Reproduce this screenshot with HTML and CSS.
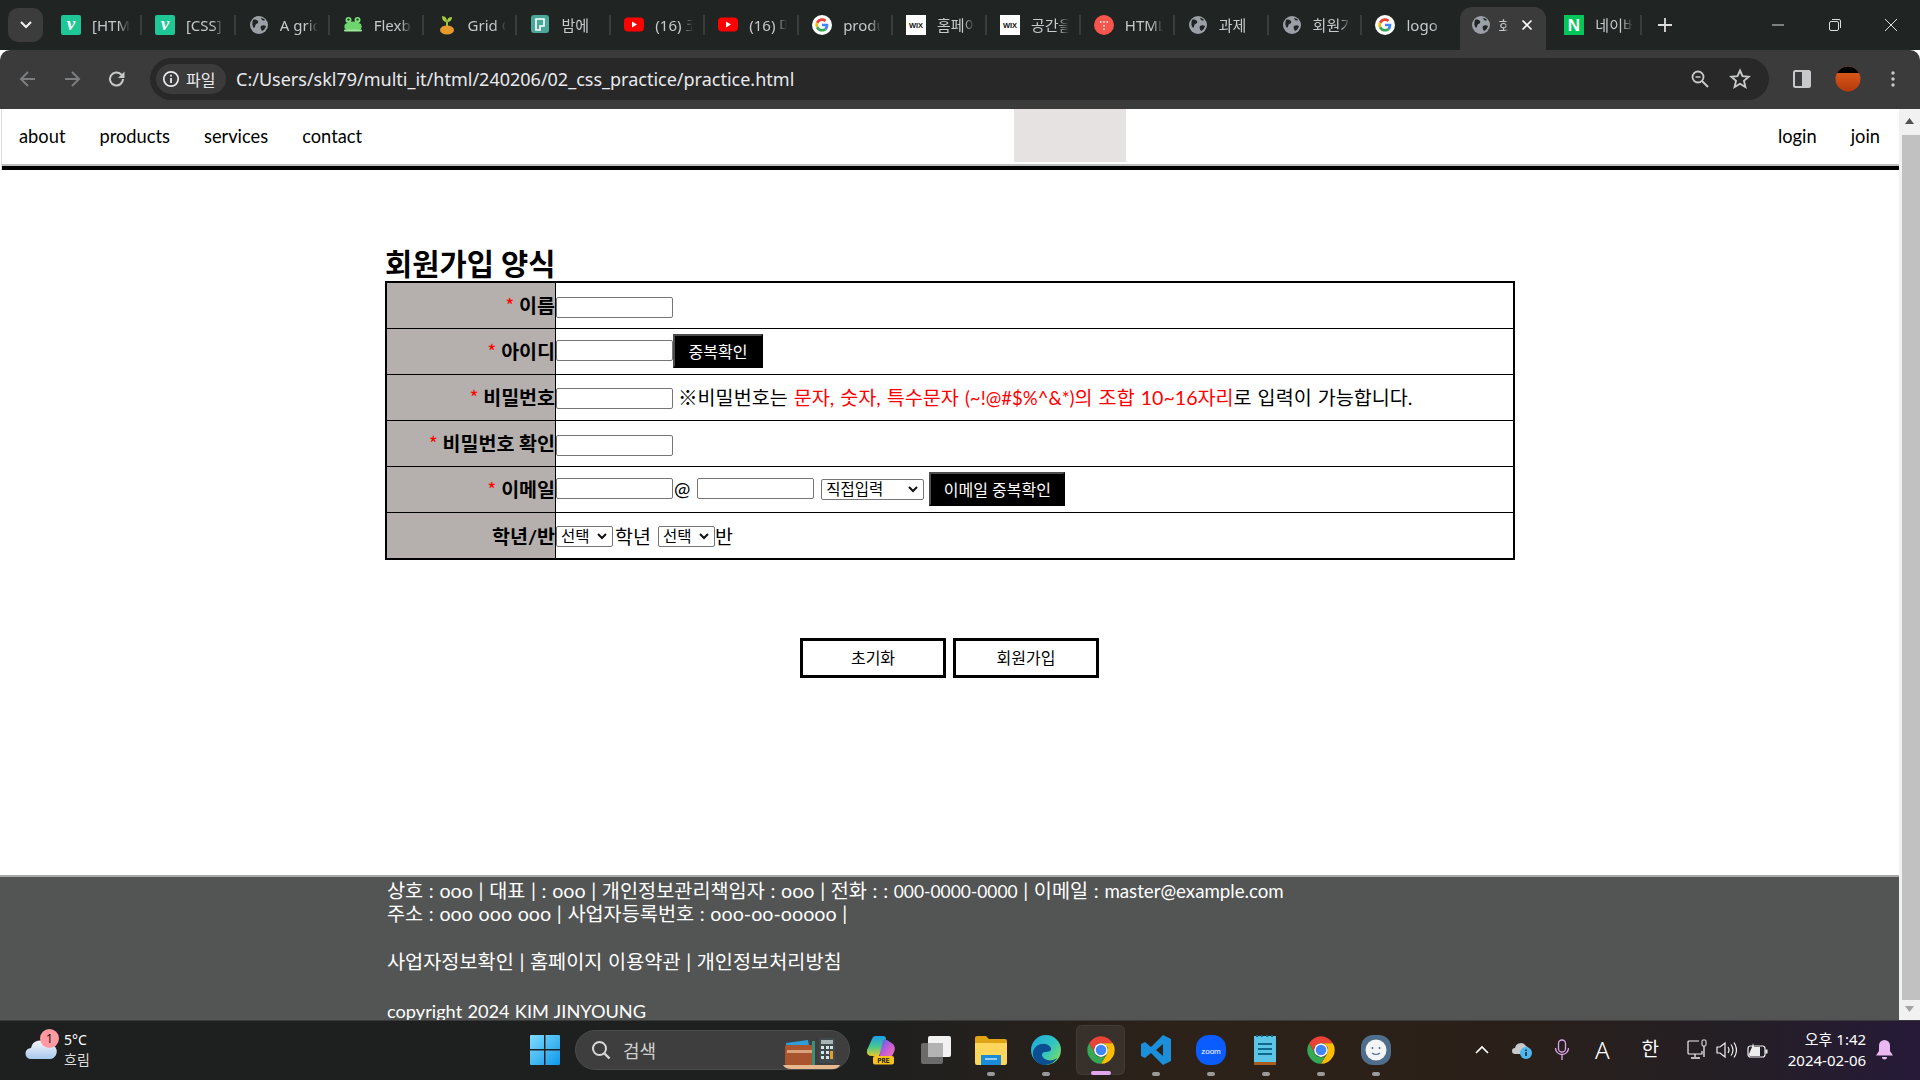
FILE: index.html
```html
<!DOCTYPE html>
<html lang="ko">
<head>
<meta charset="utf-8">
<title>회원가입 양식</title>
<link rel="stylesheet" href="styles.css">
</head>
<body>
<svg class="defs" width="0" height="0" aria-hidden="true">
  <defs>
    <symbol id="i-v" viewBox="0 0 20 20"><rect width="20" height="20" rx="2" fill="#1fc796"/><text x="10" y="15" text-anchor="middle" class="fav-v">v</text></symbol>
    <symbol id="i-globe" viewBox="0 0 20 20"><circle cx="10" cy="10" r="9" fill="#9aa0a6"/><path d="M4 5c2-1 4 0 5 1 1 2-1 3-2 3-1 2-1 3-2 4-2-2-2-5-1-8zM12 3c2 0 3 1 4 2-1 1-3 1-4-2zM12 11c2-1 3-1 5 0-1 3-2 4-4 5-1-2-2-3-1-5z" fill="#202423"/></symbol>
    <symbol id="i-frog" viewBox="0 0 20 20"><circle cx="5.5" cy="5" r="3" fill="#7ee07e"/><circle cx="14.500" cy="5" r="3" fill="#7ee07e"/><circle cx="5.500" cy="4.600" r="1.200" fill="#1d4a1d"/><circle cx="14.500" cy="4.600" r="1.200" fill="#1d4a1d"/><path d="M2 9q8-5 16 0 2 5-2 6H4q-4-1-2-6z" fill="#6fd66f"/><rect x="1" y="14.500" width="18" height="2" rx="1" fill="#9ae89a"/></symbol>
    <symbol id="i-sprout" viewBox="0 0 20 20"><ellipse cx="10" cy="15" rx="7" ry="4.500" fill="#e89a2c"/><path d="M10 11V7" stroke="#9ac43c" stroke-width="2"/><path d="M10 7Q5 7 5 1q5 0 5 6zM10 7q5 0 5-5-5 0-5 5z" fill="#a4cc3e"/></symbol>
    <symbol id="i-paper" viewBox="0 0 20 20"><rect x="1" width="18" height="18" rx="3" fill="#4aa79a"/><path d="M6 4h8v7h-4v4H6z" fill="none" stroke="#fff" stroke-width="1.600"/></symbol>
    <symbol id="i-yt" viewBox="0 0 20 20"><rect y="2.500" width="20" height="14" rx="4" fill="#f00"/><path d="M8 6.500l5 3-5 3z" fill="#fff"/></symbol>
    <symbol id="i-g" viewBox="0 0 60 60"><circle cx="30" cy="30" r="30" fill="#fff"/><g transform="translate(10 10) scale(.83)"><path fill="#EA4335" d="M24 9.500c3.540 0 6.710 1.220 9.210 3.600l6.850-6.850C35.900 2.380 30.470 0 24 0 14.620 0 6.510 5.380 2.560 13.220l7.980 6.190C12.430 13.720 17.740 9.500 24 9.500z"/><path fill="#4285F4" d="M46.980 24.550c0-1.570-.15-3.090-.38-4.550H24v9.020h12.940c-.58 2.960-2.260 5.480-4.780 7.180l7.730 6c4.510-4.180 7.090-10.360 7.090-17.650z"/><path fill="#FBBC05" d="M10.530 28.590c-.48-1.450-.76-2.990-.76-4.590s.27-3.140.76-4.590l-7.980-6.190C.92 16.460 0 20.120 0 24c0 3.880.92 7.540 2.560 10.780l7.970-6.190z"/><path fill="#34A853" d="M24 48c6.480 0 11.930-2.130 16.080-5.810l-7.730-6c-2.150 1.450-4.920 2.300-8.350 2.300-6.260 0-11.570-4.220-13.470-9.910l-7.980 6.190C6.510 42.620 14.620 48 24 48z"/></g></symbol>
    <symbol id="i-wix" viewBox="0 0 20 20"><rect width="20" height="20" fill="#fff"/><text x="10" y="12.500" text-anchor="middle" class="fav-wix">WIX</text></symbol>
    <symbol id="i-t" viewBox="0 0 20 20"><circle cx="10" cy="10" r="10" fill="#f5554a"/><path d="M6 7h1.500M9.200 7h1.600M12.500 7H14M10 10v1.500M10 13.500v1.500" stroke="#fff" stroke-width="1.500"/></symbol>
    <symbol id="i-n" viewBox="0 0 20 20"><rect width="20" height="20" fill="#03c75a"/><text x="10" y="16" text-anchor="middle" class="fav-n">N</text></symbol>
    <symbol id="i-chrome" viewBox="0 0 48 48"><path fill="#ea4335" d="M5 13A22 22 0 0 1 43 13H24A11 11 0 0 0 14 29z"/><path fill="#fbbc04" d="M43 13A22 22 0 0 1 24 46L34 29A11 11 0 0 0 24 13z"/><path fill="#34a853" d="M24 46A22 22 0 0 1 5 13L14 29A11 11 0 0 0 34 29z"/><circle cx="24" cy="24" r="11" fill="#fff"/><circle cx="24" cy="24" r="8.500" fill="#4285f4"/></symbol>
  </defs>
</svg>

<header class="tabstrip">
  <div class="tab-menu"><svg width="14" height="10" viewBox="0 0 14 10"><path d="M2 2l5 5 5-5" fill="none" stroke="#eee" stroke-width="2.200"/></svg></div>
  <div class="tab"><svg class="fav"><use href="#i-v"/></svg><span class="tab-label">[HTML</span></div>
  <div class="tab"><svg class="fav"><use href="#i-v"/></svg><span class="tab-label">[CSS]</span></div>
  <div class="tab"><svg class="fav"><use href="#i-globe"/></svg><span class="tab-label">A grid</span></div>
  <div class="tab"><svg class="fav"><use href="#i-frog"/></svg><span class="tab-label">Flexbo</span></div>
  <div class="tab"><svg class="fav"><use href="#i-sprout"/></svg><span class="tab-label">Grid G</span></div>
  <div class="tab"><svg class="fav"><use href="#i-paper"/></svg><span class="tab-label">밤에</span></div>
  <div class="tab"><svg class="fav"><use href="#i-yt"/></svg><span class="tab-label">(16) 코딩</span></div>
  <div class="tab"><svg class="fav"><use href="#i-yt"/></svg><span class="tab-label">(16) 마</span></div>
  <div class="tab"><svg class="fav"><use href="#i-g"/></svg><span class="tab-label">produ</span></div>
  <div class="tab"><svg class="fav"><use href="#i-wix"/></svg><span class="tab-label">홈페이</span></div>
  <div class="tab"><svg class="fav"><use href="#i-wix"/></svg><span class="tab-label">공간을</span></div>
  <div class="tab"><svg class="fav"><use href="#i-t"/></svg><span class="tab-label">HTML</span></div>
  <div class="tab"><svg class="fav"><use href="#i-globe"/></svg><span class="tab-label">과제</span></div>
  <div class="tab"><svg class="fav"><use href="#i-globe"/></svg><span class="tab-label">회원가</span></div>
  <div class="tab tab-plain"><svg class="fav"><use href="#i-g"/></svg><span class="tab-label">logo</span></div>
  <div class="tab tab-active"><svg class="fav"><use href="#i-globe"/></svg><span class="tab-label">회</span><svg class="tab-close" width="12" height="12" viewBox="0 0 12 12"><path d="M1.500 1.500l9 9M10.500 1.500l-9 9" stroke="#fff" stroke-width="1.600"/></svg></div>
  <div class="tab tab-last"><svg class="fav"><use href="#i-n"/></svg><span class="tab-label">네이버</span></div>
  <svg class="new-tab" width="16" height="16" viewBox="0 0 16 16"><path d="M8 1v14M1 8h14" stroke="#ddd" stroke-width="1.800"/></svg>
  <div class="win-controls">
    <svg width="14" height="14" viewBox="0 0 14 14"><path d="M1 7h12" stroke="#ddd" stroke-width="1"/></svg>
    <svg width="14" height="14" viewBox="0 0 14 14"><rect x="1.500" y="3.500" width="9" height="9" rx="1.500" fill="none" stroke="#ddd"/><path d="M4 1.500h7a1.500 1.500 0 0 1 1.500 1.500v7" fill="none" stroke="#ddd"/></svg>
    <svg width="14" height="14" viewBox="0 0 14 14"><path d="M1 1l12 12M13 1L1 13" stroke="#ddd" stroke-width="1"/></svg>
  </div>
</header>

<div class="toolbar">
  <svg class="tb-back" width="20" height="20" viewBox="0 0 20 20"><path d="M17 10H4M10 3l-7 7 7 7" fill="none" stroke="#7b7d7e" stroke-width="2"/></svg>
  <svg class="tb-fwd" width="20" height="20" viewBox="0 0 20 20"><path d="M3 10h13M10 3l7 7-7 7" fill="none" stroke="#7b7d7e" stroke-width="2"/></svg>
  <svg class="tb-reload" width="20" height="20" viewBox="0 0 20 20"><path d="M16 10a6.500 6.500 0 1 1-2-4.700L16 7" fill="none" stroke="#c8c9ca" stroke-width="2"/><path d="M17.500 2.500v6.500H11z" fill="#c8c9ca"/></svg>
  <div class="omnibox">
    <div class="chip">
      <svg width="18" height="18" viewBox="0 0 18 18"><circle cx="9" cy="9" r="7.200" fill="none" stroke="#e8eaed" stroke-width="1.700"/><path d="M9 8v5M9 4.800v1.800" stroke="#e8eaed" stroke-width="1.800"/></svg>
      <span>파일</span>
    </div>
    <span class="url">C:/Users/skl79/multi_it/html/240206/02_css_practice/practice.html</span>
    <svg class="om-zoom" width="20" height="20" viewBox="0 0 20 20"><circle cx="8" cy="8" r="5.500" fill="none" stroke="#c8c9ca" stroke-width="1.800"/><path d="M12 12l6 6" stroke="#c8c9ca" stroke-width="2"/><path d="M5.500 8h5" stroke="#c8c9ca" stroke-width="1.500"/></svg>
    <svg class="om-star" width="22" height="22" viewBox="0 0 22 22"><path d="M11 2.500l2.500 5.700 6.200.6-4.700 4.100 1.400 6.100-5.400-3.200-5.400 3.200 1.400-6.100-4.700-4.100 6.200-.6z" fill="none" stroke="#c8c9ca" stroke-width="1.900"/></svg>
  </div>
  <svg class="tb-side" width="20" height="20" viewBox="0 0 20 20"><rect x="2" y="2" width="16" height="16" rx="1.500" fill="none" stroke="#c8c9ca" stroke-width="2"/><rect x="10" y="2" width="8" height="16" fill="#c8c9ca"/></svg>
  <svg class="tb-avatar" width="26" height="26" viewBox="0 0 26 26"><defs><linearGradient id="av" x1="0" y1="0" x2="0" y2="1"><stop offset="0" stop-color="#e4601c"/><stop offset="1" stop-color="#b53a0c"/></linearGradient></defs><circle cx="13" cy="13" r="12.500" fill="url(#av)"/><path d="M2 7A12.500 12.500 0 0 1 24 7z" fill="#000"/></svg>
  <svg class="tb-menu" width="6" height="20" viewBox="0 0 6 20"><circle cx="3" cy="4" r="1.700" fill="#c8c9ca"/><circle cx="3" cy="10" r="1.700" fill="#c8c9ca"/><circle cx="3" cy="16" r="1.700" fill="#c8c9ca"/></svg>
</div>

<div class="viewport">
  <div class="page">
    <nav class="site-nav">
      <ul class="nav-links">
        <li>about</li><li>products</li><li>services</li><li>contact</li>
      </ul>
      <div class="logo-box"></div>
      <ul class="nav-links">
        <li>login</li><li>join</li>
      </ul>
    </nav>
    <main class="content">
      <h2 class="form-title">회원가입 양식</h2>
      <table class="form-table">
        <tr><th><span class="req">*</span> 이름</th><td><input class="field" type="text"></td></tr>
        <tr><th><span class="req">*</span> 아이디</th><td class="cell-up"><input class="field" type="text"><button class="btn-dark" type="button">중복확인</button></td></tr>
        <tr><th><span class="req">*</span> 비밀번호</th><td><input class="field field-down" type="password"><span class="hint">※비밀번호는 <span class="hint-red">문자, 숫자, 특수문자 <small class="hint-small">(~!@#$%^&amp;*)</small>의 조합 10~16자리</span>로 입력이 가능합니다.</span></td></tr>
        <tr><th><span class="req">*</span> 비밀번호 확인</th><td><input class="field" type="password"></td></tr>
        <tr><th><span class="req">*</span> 이메일</th><td class="cell-up"><input class="field" type="text"><span class="at">@</span><input class="field field-domain" type="text"><select class="sel sel-mail"><option>직접입력</option></select><button class="btn-dark btn-mail" type="button">이메일 중복확인</button></td></tr>
        <tr><th>학년/반</th><td><select class="sel sel-num"><option>선택</option></select><span class="unit">학년</span><select class="sel sel-num sel-second"><option>선택</option></select><span class="unit">반</span></td></tr>
      </table>
      <div class="actions">
        <button class="btn-line" type="button">초기화</button>
        <button class="btn-line" type="button">회원가입</button>
      </div>
    </main>
    <footer class="site-footer">
      <p class="f-line f-first">상호 : ooo | 대표 | : ooo | 개인정보관리책임자 : ooo | 전화 : : <span class="f-num">000-0000-0000</span> | 이메일 : <span class="f-mail">master@example.com</span></p>
      <p class="f-line">주소 : ooo ooo ooo | 사업자등록번호 : ooo-oo-ooooo |</p>
      <p class="f-line f-gap">사업자정보확인 | 홈페이지 이용약관 | 개인정보처리방침</p>
      <p class="f-line f-gap2 f-copy">copyright 2024 KIM JINYOUNG</p>
    </footer>
  </div>
  <div class="scrollbar">
    <svg width="11" height="8" viewBox="0 0 11 8"><path d="M5.500 1l4.500 6H1z" fill="#505050"/></svg>
    <div class="thumb"></div>
    <svg width="11" height="8" viewBox="0 0 11 8"><path d="M5.500 7L10 1H1z" fill="#a3a3a3"/></svg>
  </div>
</div>

<div class="taskbar">
  <div class="weather">
    <div class="weather-icon">
      <svg width="32" height="20" viewBox="0 0 32 20"><defs><linearGradient id="cl" x1="0" y1="0" x2="0" y2="1"><stop offset="0" stop-color="#f6f8fb"/><stop offset="1" stop-color="#a9c8ee"/></linearGradient></defs><path d="M6 20a5.500 5.500 0 0 1 0-11 9 9 0 0 1 16-4 7.500 7.500 0 0 1 4 15z" fill="url(#cl)"/></svg>
      <span class="badge">1</span>
    </div>
    <div class="weather-text"><span>5°C</span><span class="weather-sub">흐림</span></div>
  </div>
  <div class="tb-item">
    <svg width="30" height="30" viewBox="0 0 30 30"><defs><linearGradient id="win" x1="0" y1="0" x2="1" y2="1"><stop offset="0" stop-color="#7fdcfd"/><stop offset="1" stop-color="#0f98ea"/></linearGradient></defs><path d="M0 1a1 1 0 0 1 1-1h13v14H0zM15.500 0H29a1 1 0 0 1 1 1v13H15.500zM0 15.500h14V30H1a1 1 0 0 1-1-1zM15.500 15.500H30V29a1 1 0 0 1-1 1H15.500z" fill="url(#win)"/></svg>
  </div>
  <div class="searchbox">
    <svg width="20" height="20" viewBox="0 0 20 20"><circle cx="8.500" cy="8.500" r="6.500" fill="none" stroke="#d8d8d8" stroke-width="2"/><path d="M13 13l5.500 5.500" stroke="#d8d8d8" stroke-width="2.400"/></svg>
    <span class="search-text">검색</span>
    <svg class="search-art" width="58" height="34" viewBox="0 0 58 34"><rect x="2" y="10" width="30" height="20" rx="1.500" fill="#a8552f"/><path d="M3 8l22-3 1 5H3z" fill="#2c9fd8"/><rect x="4" y="15" width="25" height="3" fill="#d9a27a"/><rect x="29" y="6" width="3" height="24" fill="#3d8f78"/><rect x="36" y="3" width="16" height="25" rx="1.500" fill="#3f4a4d"/><rect x="38" y="5" width="12" height="4" fill="#a9b5b5"/><path d="M38 11h3v3h-3zM43 11h3v3h-3zM47 11h3v3h-3zM38 16h3v3h-3zM43 16h3v3h-3zM38 21h3v3h-3zM43 21h3v3h-3z" fill="#d8e2e2"/><rect x="47" y="16" width="3" height="8" fill="#e89b2c"/><path d="M0 30h57q-2 4-7 4H8q-6 0-8-4z" fill="#e6b98f"/></svg>
  </div>
  <div class="tb-apps">
    <div class="tb-item"><svg width="30" height="30" viewBox="0 0 30 30"><defs><linearGradient id="cpa" x1="0" y1="0" x2="0" y2="1"><stop offset="0" stop-color="#1c9fe8"/><stop offset=".55" stop-color="#49c98a"/><stop offset="1" stop-color="#e8c62a"/></linearGradient><linearGradient id="cpb" x1="0" y1="0" x2="1" y2="1"><stop offset="0" stop-color="#2f6fe8"/><stop offset=".5" stop-color="#c65ad8"/><stop offset="1" stop-color="#f07ab0"/></linearGradient></defs><path d="M9 1h8c2 0 3 1 3 3L13 21H6q-6 0-5-6L6 4q1-3 3-3z" fill="url(#cpa)"/><path d="M17 5q2-1 4 0l6 4q3 3 1 8l-2 4q-1 2-4 2h-9z" fill="url(#cpb)"/><rect x="7" y="21" width="21" height="8.500" rx="2" fill="#f8c21c"/><text x="17.500" y="28" text-anchor="middle" class="pre-text">PRE</text></svg></div>
    <div class="tb-item"><svg width="32" height="30" viewBox="0 0 32 30"><rect x="1" y="8" width="22" height="21" rx="2" fill="#6b6b6b"/><rect x="8" y="1" width="23" height="21" rx="2" fill="#f2f2f2"/><rect x="8" y="8" width="15" height="14" fill="#b3b3b3"/></svg></div>
    <div class="tb-item has-dot"><svg width="34" height="30" viewBox="0 0 34 30"><path d="M1 3a2 2 0 0 1 2-2h9l3 3h16a2 2 0 0 1 2 2v4H1z" fill="#e0a314"/><path d="M1 8h32v20a2 2 0 0 1-2 2H3a2 2 0 0 1-2-2z" fill="#ffd65c"/><path d="M7 20h20v10H7z" fill="#1a8bd6"/><path d="M11 24h12" stroke="#bfe4fa" stroke-width="1.500"/></svg></div>
    <div class="tb-item has-dot"><svg width="30" height="30" viewBox="0 0 30 30"><defs><linearGradient id="ed" x1="0" y1="0" x2="1" y2=".8"><stop offset="0" stop-color="#1ea7e0"/><stop offset=".6" stop-color="#33c6c0"/><stop offset="1" stop-color="#7ddb5a"/></linearGradient></defs><circle cx="15" cy="15" r="15" fill="url(#ed)"/><path d="M2 17C4 8 16 6 20 13c1 3-3 4-6 4-4 0-4 5 0 7 3 2 8 2 12-1-3 5-8 7-13 7C6 29 1 24 2 17z" fill="#0b4f92"/></svg></div>
    <div class="tb-item tb-active has-pill"><svg width="30" height="30"><use href="#i-chrome"/></svg></div>
    <div class="tb-item has-dot"><svg width="30" height="30" viewBox="0 0 30 30"><path d="M22 0l8 4v22l-8 4L10 18l-6 5-4-2v-12l4-2 6 5zM22 9l-7 6 7 6z" fill="#1c8fdb"/></svg></div>
    <div class="tb-item has-dot"><svg width="30" height="30" viewBox="0 0 30 30"><rect width="30" height="30" rx="13" fill="#0b5cff"/><text x="15" y="18.500" text-anchor="middle" class="zoom-text">zoom</text></svg></div>
    <div class="tb-item has-dot"><svg width="24" height="30" viewBox="0 0 24 30"><rect y="1" width="22" height="29" fill="#5cc4e4"/><rect y="27" width="22" height="3" fill="#a85c20"/><path d="M2 1h2M7 1h2M12 1h2M17 1h2" stroke="#0e6a8a" stroke-width="2"/><path d="M4 9h14M4 14h14M4 19h14" stroke="#0e6a8a" stroke-width="2"/></svg></div>
    <div class="tb-item has-dot"><svg width="30" height="30"><use href="#i-chrome"/></svg></div>
    <div class="tb-item has-dot"><svg width="30" height="30" viewBox="0 0 30 30"><rect width="30" height="30" rx="12" fill="#4e6e8c"/><circle cx="15" cy="15" r="10.500" fill="#f3f4f5"/><circle cx="11.500" cy="13" r="1" fill="#4e6e8c"/><circle cx="18.500" cy="13" r="1" fill="#4e6e8c"/><path d="M11 18q4 3 8 0" fill="none" stroke="#4e6e8c" stroke-width="1.200"/></svg></div>
  </div>
  <div class="tray">
    <svg width="14" height="9" viewBox="0 0 14 9"><path d="M1 8l6-6 6 6" fill="none" stroke="#fff" stroke-width="1.700"/></svg>
    <svg class="tray-cloud" width="21" height="20" viewBox="0 0 21 20"><path d="M3 14a3 3 0 0 1 0-6 6 6 0 0 1 11-2 4 4 0 0 1 2 6l-2 2z" fill="#c9c9c9"/><circle cx="14" cy="13" r="6" fill="#4fb7ec"/><path d="M14 12v4M14 9.500v1.500" stroke="#10202a" stroke-width="1.500"/></svg>
    <svg class="tray-mic" width="16" height="22" viewBox="0 0 16 22"><rect x="4.500" y="1" width="7" height="12" rx="3.500" fill="none" stroke="#d9a6ec" stroke-width="1.300"/><path d="M1.500 9a6.500 6.500 0 0 0 13 0M8 16v5" fill="none" stroke="#d9a6ec" stroke-width="1.300"/></svg>
    <span class="tray-a">A</span>
    <span class="tray-han">한</span>
    <svg class="tray-net" width="21" height="21" viewBox="0 0 21 21"><path d="M12 2H2a1 1 0 0 0-1 1v11a1 1 0 0 0 1 1h13v-3" fill="none" stroke="#eee" stroke-width="1.200"/><path d="M8 15v3M4 19h9" stroke="#eee" stroke-width="1.300"/><rect x="15" y="1" width="4" height="6" rx="1" fill="none" stroke="#eee"/><path d="M17 7v11" stroke="#eee" stroke-width="1.300"/></svg>
    <svg class="tray-vol" width="21" height="18" viewBox="0 0 21 18"><path d="M1 6h3l5-4v14l-5-4H1z" fill="none" stroke="#eee" stroke-width="1.200"/><path d="M12 6q2 3 0 6M15 3.500q4 5.500 0 11M18 1.500q5 7.500 0 15" fill="none" stroke="#eee" stroke-width="1.200"/></svg>
    <svg class="tray-bat" width="21" height="16" viewBox="0 0 21 16"><rect x="1" y="4" width="17" height="11" rx="2.500" fill="none" stroke="#eee" stroke-width="1.200"/><rect x="18.500" y="7.500" width="2" height="4" fill="#eee"/><path d="M1.500 13L5 5l1-4 1 4h6v9H3z" fill="#eee"/></svg>
    <div class="clock"><span>오후 1:42</span><span>2024-02-06</span></div>
    <svg class="tray-bell" width="17" height="21" viewBox="0 0 17 21"><path d="M8.500 1a5.500 5.500 0 0 1 5.500 5.500V12l3 4.500H0L3 12V6.500A5.500 5.500 0 0 1 8.500 1zM6 18h5a2.500 2.500 0 0 1-5 0z" fill="#ecb8f2"/></svg>
  </div>
</div>
</body>
</html>
```

FILE: styles.css
```css
* { box-sizing: border-box; }
html, body { margin: 0; padding: 0; }
body {
  width: 1920px;
  height: 1080px;
  overflow: hidden;
  display: flex;
  flex-direction: column;
  font-family: "Noto Sans", "Noto Sans CJK KR", sans-serif;
  background: #fff;
}
.defs { position: absolute; }
.fav-v { font: italic 700 19px "Liberation Serif", serif; fill: #fff; }
.fav-wix { font: 700 7.5px "Liberation Sans", sans-serif; fill: #111; }
.fav-n { font: 900 17px "Liberation Sans", sans-serif; fill: #fff; }
.pre-text { font: 700 7px "DejaVu Sans Mono", monospace; fill: #222; }
.zoom-text { font: 500 8px "Liberation Sans", sans-serif; fill: #fff; }

/* browser tab strip */
.tabstrip {
  height: 50px;
  flex: none;
  display: flex;
  align-items: center;
  background: #202423;
  padding-left: 8px;
}
.tab-menu {
  width: 35px;
  height: 34px;
  margin-right: 5px;
  margin-top: -1px;
  background: #3c3c3c;
  border-radius: 10px;
  display: flex;
  align-items: center;
  justify-content: center;
}
.tab {
  width: 93.9px;
  height: 20px;
  padding-left: 13px;
  margin-top: -1px;
  display: flex;
  align-items: center;
  gap: 11px;
  border-right: 2px solid #3a3d3d;
  color: #c7c9ca;
  font-size: 15px;
  flex: none;
}
.fav { width: 20px; height: 20px; flex: none; }
.tab-label {
  width: 38px;
  overflow: hidden;
  white-space: nowrap;
  -webkit-mask-image: linear-gradient(90deg, #000 70%, transparent);
  mask-image: linear-gradient(90deg, #000 70%, transparent);
}
.tab-plain { border-right-color: transparent; }
.tab-active {
  height: 43px;
  width: 86px;
  margin-top: 7px;
  margin-left: 4px;
  padding: 0 0 7px 11px;
  gap: 7px;
  border: 0;
  border-radius: 12px 12px 0 0;
  background: #3b3b3b;
}
.tab-active .tab-label { width: 10px; flex: none; }
.tab-close { flex: none; margin-left: 6px; }
.tab-last {
  width: 96px;
  padding-left: 18px;
  gap: 11px;
  border-right: 2px solid #3a3d3d;
}
.new-tab { margin-left: 15px; flex: none; }
.win-controls {
  margin-left: auto;
  width: 127px;
  margin-right: 22px;
  display: flex;
  justify-content: space-between;
}

/* browser toolbar */
.toolbar {
  height: 59px;
  flex: none;
  display: flex;
  align-items: center;
  background: #3b3b3b;
  border-radius: 10px 10px 0 0;
  padding-bottom: 1px;
}
.tb-back { margin-left: 18px; }
.tb-fwd { margin-left: 24px; }
.tb-reload { margin-left: 25px; }
.omnibox {
  width: 1619px;
  height: 42px;
  margin-left: 23px;
  padding-left: 6px;
  border-radius: 21px;
  background: #282828;
  display: flex;
  align-items: center;
}
.chip {
  width: 70px;
  height: 30px;
  padding-left: 6px;
  display: flex;
  align-items: center;
  gap: 6px;
  border-radius: 15px;
  background: #3b3b3b;
  color: #e8eaed;
  font-size: 16px;
}
.url { margin-left: 10px; color: #e8eaed; font-size: 18px; white-space: nowrap; }
.om-zoom { margin-left: auto; }
.om-star { margin-left: 19px; margin-right: 18px; }
.tb-side { margin-left: 23px; }
.tb-avatar { margin-left: 23px; }
.tb-menu { margin-left: 29px; }

/* viewport */
.viewport { height: 911px; flex: none; display: flex; }
.page {
  width: 1899px;
  display: flex;
  flex-direction: column;
  overflow: hidden;
  font-family: Lato, "Noto Sans CJK KR", sans-serif;
}
.scrollbar {
  width: 21px;
  background: #f1f1f1;
  display: flex;
  flex-direction: column;
  align-items: center;
  padding-top: 8px;
}
.thumb { width: 18px; height: 865px; margin: 10px 0 5px 2px; background: #c1c1c1; flex: none; }

.site-nav {
  height: 61px;
  flex: none;
  margin-left: 2px;
  padding: 0 19px 4px 17px;
  display: flex;
  justify-content: space-between;
  border-bottom: 4px solid #000;
  box-shadow: inset 0 -2px 0 #bdbdbd, -1px 0 0 #ddd;
  font-size: 18.3px;
  color: #000;
}
.nav-links {
  list-style: none;
  margin: 0;
  padding: 0;
  display: flex;
  align-items: center;
  gap: 34px;
}
.logo-box { width: 112px; height: 53px; background: #e6e2e2; }

.content { flex: 1; padding: 75px 0 0 385px; }
.form-title {
  margin: 0;
  height: 36px;
  line-height: 38px;
  font-size: 29.6px;
  font-weight: 700;
}
.form-table {
  width: 1130px;
  border: 2px solid #000;
  border-spacing: 0;
  font-size: 19.5px;
}
.form-table tr { height: 46px; }
.form-table tr:last-child { height: 45px; }
.form-table th, .form-table td {
  padding: 0;
  border-bottom: 1px solid #000;
  white-space: nowrap;
}
.form-table tr:last-child th, .form-table tr:last-child td { border-bottom: 0; }
.form-table th {
  width: 169px;
  padding-bottom: 2px;
  background: #b5b0ae;
  border-right: 1px solid #000;
  text-align: right;
  font-weight: 700;
}
.form-table tr:last-child th { padding-bottom: 0; }
.form-table td.cell-up { padding-bottom: 2px; }
.req { color: #f00; font-weight: 400; font-family: "Noto Sans CJK KR", sans-serif; }
.field {
  width: 117px;
  height: 21px;
  margin: 0;
  padding: 0 2px;
  border: 1px solid #767676;
  border-radius: 2px;
  background: #fff;
  vertical-align: middle;
}
.field-domain { margin-left: 7px; }
.field-down { margin-top: 2px; }
.at { vertical-align: middle; font-size: 19.5px; margin-left: 1px; }
.btn-dark {
  width: 90px;
  height: 34px;
  padding: 0;
  border: 2px solid #000;
  border-top-color: #4d4d4d;
  border-left-color: #4d4d4d;
  background: #000;
  color: #fff;
  font: inherit;
  font-size: 16px;
  vertical-align: middle;
}
.btn-mail { width: 136px; margin-left: 5px; }
.hint {
  display: inline-block;
  margin: 0 0 2px 5px;
  vertical-align: middle;
  font-size: 19.6px;
  word-spacing: 1px;
}
.hint-red { color: #f00; }
.hint-small { font-size: 18.6px; }
.sel {
  -webkit-appearance: none;
  appearance: none;
  height: 21px;
  margin: 2px 0 0;
  padding: 0 0 0 4px;
  font: inherit;
  font-size: 15.5px;
  line-height: 19px;
  background: #fff url("data:image/svg+xml,%3Csvg xmlns='http://www.w3.org/2000/svg' width='10' height='7'%3E%3Cpath d='M1 1l4 4 4-4' fill='none' stroke='%23111' stroke-width='2'/%3E%3C/svg%3E") no-repeat right 5px center;
  border: 1px solid #767676;
  border-radius: 2px;
  vertical-align: middle;
}
.sel-mail { width: 103px; margin-left: 7px; }
.sel-num { width: 57px; }
.sel-second { margin-left: 7px; }
.unit { vertical-align: middle; font-size: 19.5px; margin-left: 2px; }
.sel-second + .unit { margin-left: 0; }

.actions { margin-top: 78px; padding-left: 415px; display: flex; gap: 7px; }
.btn-line {
  width: 146px;
  height: 40px;
  padding: 0 0 2px;
  border: 3px solid #000;
  background: #fff;
  color: #000;
  font: inherit;
  font-size: 16px;
}

.site-footer {
  height: 145px;
  flex: none;
  overflow: hidden;
  padding: 2px 0 0 387px;
  border-top: 2px solid #a9a9a9;
  background: #535554;
  color: #fff;
  font-size: 19.7px;
  word-spacing: .6px;
}
.f-line { margin: 0; height: 24px; line-height: 24px; white-space: nowrap; }
.f-first { height: 23px; }
.f-num { font-size: 17.4px; }
.f-mail { font-size: 18.7px; }
.f-copy { font-size: 18.2px; }
.f-gap { margin-top: 24px; }
.f-gap2 { margin-top: 25px; }

/* windows taskbar */
.taskbar {
  height: 60px;
  flex: none;
  display: flex;
  align-items: center;
  padding-bottom: 2px;
  background: linear-gradient(90deg, #1e1f1f 0%, #1e1f1f 45%, #2d2219 62%, #2a2019 78%, #241f25 90%, #261a38 100%);
  border-top: 1px solid #3a3a3a;
  color: #fff;
}
.weather { width: 517px; padding-left: 25px; display: flex; align-items: center; flex: none; }
.weather-icon { width: 39px; height: 38px; padding-top: 8px; position: relative; }
.badge {
  position: absolute;
  left: 15px;
  top: -2px;
  width: 19px;
  height: 19px;
  border-radius: 50%;
  background: #ff9aa2;
  color: #111;
  font-size: 12px;
  line-height: 19px;
  text-align: center;
}
.weather-text { display: flex; flex-direction: column; font-size: 14px; line-height: 20px; }
.weather-sub { color: #ddd; }
.tb-item {
  width: 55px;
  height: 50px;
  flex: none;
  display: flex;
  align-items: center;
  justify-content: center;
  position: relative;
}
.has-dot::after, .has-pill::after {
  content: "";
  position: absolute;
  bottom: -1px;
  width: 8px;
  height: 4px;
  border-radius: 2px;
  background: #9a9a9a;
}
.has-pill::after { width: 20px; background: #e2a6ec; bottom: 0; }
.tb-active::before {
  content: "";
  position: absolute;
  left: 3px;
  right: 3px;
  top: 0;
  bottom: 0;
  border-radius: 6px;
  background: rgba(255,255,255,.07);
  border: 1px solid rgba(255,255,255,.06);
}
.tb-item svg { position: relative; }
.searchbox {
  width: 275px;
  height: 40px;
  margin-left: 3px;
  flex: none;
  padding-left: 15px;
  display: flex;
  align-items: center;
  border-radius: 20px;
  background: #3e3e3e;
  border: 1px solid #4b4b4b;
}
.search-text { margin-left: 12px; color: #d0d0d0; font-size: 18px; }
.search-art { margin-left: auto; margin-right: 8px; margin-top: 4px; }
.tb-apps { display: flex; margin-left: 3px; flex: none; }
.tray { flex: 1; display: flex; align-items: center; margin-left: 72px; }
.tray-cloud { margin-left: 23px; }
.tray-mic { margin-left: 21px; }
.tray-a { margin-left: 25px; font-size: 24px; font-weight: 300; line-height: 1; }
.tray-han { margin-left: 32px; font-size: 19px; line-height: 1; }
.tray-net { margin-left: 28px; }
.tray-vol { margin-left: 8px; }
.tray-bat { margin-left: 10px; }
.clock {
  width: 98px;
  display: flex;
  flex-direction: column;
  align-items: flex-end;
  font-size: 15px;
  line-height: 21px;
}
.tray-bell { margin-left: 10px; }
```
